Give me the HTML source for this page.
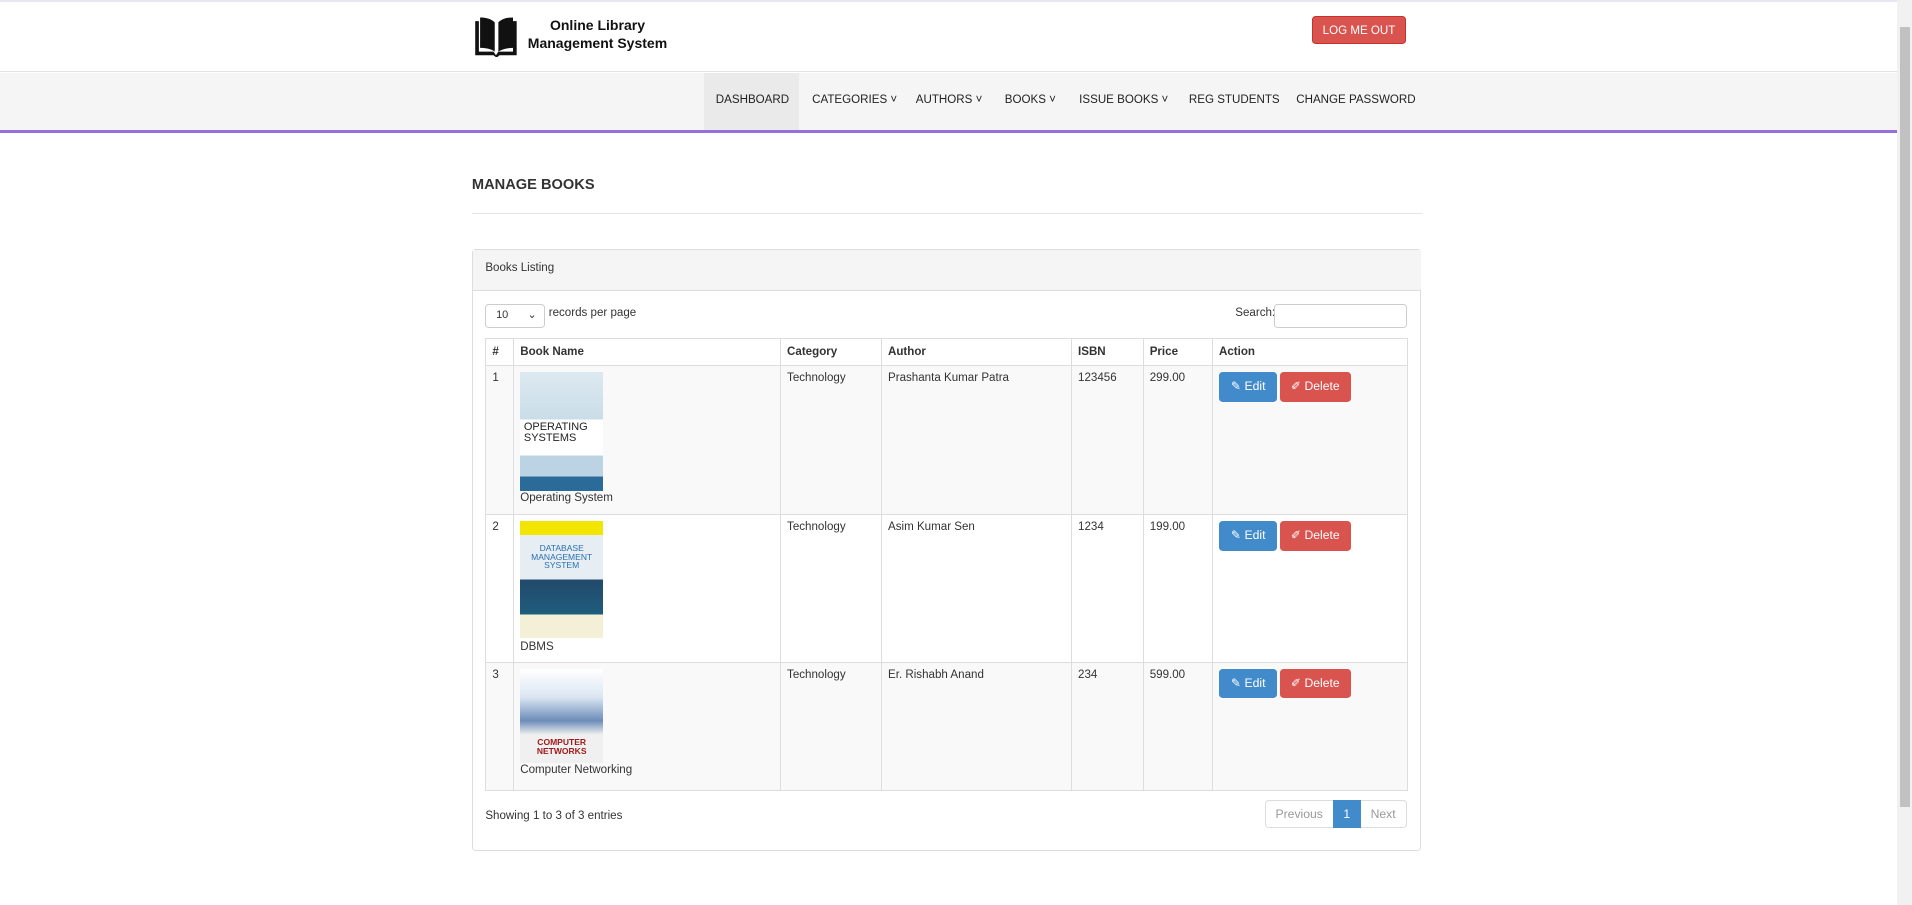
<!DOCTYPE html>
<html><head><meta charset="utf-8"><style>
html{zoom:1.2194}
body{margin:0;width:1568px;height:742px;overflow:hidden;font-family:"Liberation Sans",sans-serif;color:#333;background:#fff;position:relative;font-size:10px}
.a{position:absolute}
.top{left:0;top:0;width:1556px;height:59px;border-top:2px solid #e8e6f2;border-bottom:1px solid #e3e3e3;box-sizing:border-box}
.nav{left:0;top:60px;width:1556px;height:47px;background:#f5f5f5;border-bottom:3px solid #9370db}
.nav span{position:absolute;top:17px;font-size:9.5px;color:#222}
.scroll{left:1556px;top:0;width:12px;height:742px;background:#f1f1f1}
.thumb{left:1558px;top:22px;width:8px;height:640px;background:#c1c1c1}
.btn{color:#fff;font-size:10px;text-align:center;border-radius:3px;box-sizing:border-box}
td,th{border:1px solid #ddd;padding:5px;vertical-align:top;text-align:left;font-size:9.5px;font-weight:normal}
th{font-weight:bold;padding:6px 5px}
table{border-collapse:collapse;position:absolute;left:398px;top:277px;width:757px}
.s td{background:#f9f9f9}
</style></head><body>
<div class="a top"></div>
<svg class="a" style="left:389px;top:12px" width="37" height="35" viewBox="0 0 37 35"><path d="M1 5h3v25h12l2 3 2-3h12V5h3v28H21l-2.5 2-2.5-2H1z" fill="#111"/><path d="M5 2c5 0 9 1 12 4v24c-3-2-7-3-12-3zM32 2c-5 0-9 1-12 4v24c3-2 7-3 12-3z" fill="#111"/></svg>
<div class="a" style="left:428px;top:13px;width:124px;text-align:center;font-weight:bold;font-size:11.5px;line-height:15px;color:#111">Online Library<br>Management System</div>
<div class="a btn" style="left:1076px;top:13px;width:77px;height:23px;line-height:23px;background:#d9534f;border:1px solid #c9302c;font-size:9.5px">LOG ME OUT</div>
<div class="a nav">
<div class="a" style="left:577px;top:0;width:78px;height:47px;background:#eaeaea"></div>
<span style="left:587px">DASHBOARD</span><span style="left:666px">CATEGORIES ˅</span><span style="left:751px">AUTHORS ˅</span><span style="left:824px">BOOKS ˅</span><span style="left:885px">ISSUE BOOKS ˅</span><span style="left:975px">REG STUDENTS</span><span style="left:1063px">CHANGE PASSWORD</span>
</div>
<div class="a scroll"></div><div class="a thumb"></div>
<div class="a" style="left:387px;top:145px;font-size:12px;font-weight:bold;color:#333">MANAGE BOOKS</div>
<div class="a" style="left:387px;top:175px;width:779px;border-top:1px solid #e5e5e5"></div>
<div class="a" style="left:387px;top:204px;width:777px;height:492px;border:1px solid #ddd;border-radius:3px"></div>
<div class="a" style="left:388px;top:205px;width:777px;height:33px;background:#f5f5f5;border-bottom:1px solid #ddd"></div>
<div class="a" style="left:398px;top:215px;font-size:9.5px">Books Listing</div>
<div class="a" style="left:398px;top:249px;width:49px;height:20px;border:1px solid #ccc;border-radius:3px;box-sizing:border-box;font-size:9px;line-height:18px;padding-left:8px">10 <span style="position:absolute;right:6px">⌄</span></div>
<div class="a" style="left:450px;top:252px;font-size:9.5px">records per page</div>
<div class="a" style="left:1013px;top:252px;font-size:9.5px">Search:</div>
<div class="a" style="left:1045px;top:249px;width:109px;height:20px;border:1px solid #ccc;border-radius:3px;box-sizing:border-box"></div>
<table>
<tr><th style="width:12px">#</th><th style="width:208px">Book Name</th><th style="width:72px">Category</th><th style="width:145px">Author</th><th style="width:48px">ISBN</th><th style="width:46px">Price</th><th>Action</th></tr>
<tr class="s" style="height:122px"><td>1</td><td><div style="width:68px;height:97px;background:linear-gradient(#dde9f0 0,#c9dde8 40%,#fff 40%,#fff 70%,#bcd3e3 70%,#bcd3e3 88%,#2b6b99 88%);font-size:9px;line-height:9px;color:#222;box-sizing:border-box;padding:41px 0 0 3px">OPERATING<br>SYSTEMS</div><div style="margin-top:1px">Operating System</div></td><td>Technology</td><td>Prashanta Kumar Patra</td><td>123456</td><td>299.00</td><td><div style="position:relative;height:24px"><div class="a btn" style="left:0;top:0;width:48px;height:24px;line-height:24px;background:#428bca">✎ Edit</div><div class="a btn" style="left:50px;top:0;width:58px;height:24px;line-height:24px;background:#d9534f">✐ Delete</div></div></td></tr>
<tr style="height:121px"><td>2</td><td><div style="width:68px;height:96px;background:linear-gradient(#f2e500 0,#f2e500 12%,#e6eef4 12%,#e6eef4 50%,#234a6a 50%,#1e5c7d 80%,#f4f0d8 80%);font-size:7px;line-height:7px;color:#2a6fb0;text-align:center;box-sizing:border-box;padding-top:19px">DATABASE<br>MANAGEMENT<br>SYSTEM</div><div style="margin-top:2px">DBMS</div></td><td>Technology</td><td>Asim Kumar Sen</td><td>1234</td><td>199.00</td><td><div style="position:relative;height:24px"><div class="a btn" style="left:0;top:0;width:48px;height:24px;line-height:24px;background:#428bca">✎ Edit</div><div class="a btn" style="left:50px;top:0;width:58px;height:24px;line-height:24px;background:#d9534f">✐ Delete</div></div></td></tr>
<tr class="s" style="height:105px"><td>3</td><td><div style="width:68px;height:77px;background:linear-gradient(#fff 0,#dbe6f3 30%,#6c8db8 55%,#f0f0f0 70%);font-size:7px;line-height:7px;color:#a01a1a;font-weight:bold;text-align:center;box-sizing:border-box;padding-top:57px">COMPUTER<br>NETWORKS</div><div style="margin-top:1px">Computer Networking</div></td><td>Technology</td><td>Er. Rishabh Anand</td><td>234</td><td>599.00</td><td><div style="position:relative;height:24px"><div class="a btn" style="left:0;top:0;width:48px;height:24px;line-height:24px;background:#428bca">✎ Edit</div><div class="a btn" style="left:50px;top:0;width:58px;height:24px;line-height:24px;background:#d9534f">✐ Delete</div></div></td></tr>
</table>
<div class="a" style="left:398px;top:664px;font-size:9.5px">Showing 1 to 3 of 3 entries</div>
<div class="a" style="left:1037px;top:656px;width:117px;height:23px;border:1px solid #ddd;border-radius:3px;box-sizing:border-box"></div>
<div class="a" style="left:1046px;top:662px;color:#999">Previous</div>
<div class="a" style="left:1093px;top:656px;width:23px;height:23px;background:#428bca;color:#fff;text-align:center;line-height:23px">1</div>
<div class="a" style="left:1124px;top:662px;color:#999">Next</div>
</body></html>
